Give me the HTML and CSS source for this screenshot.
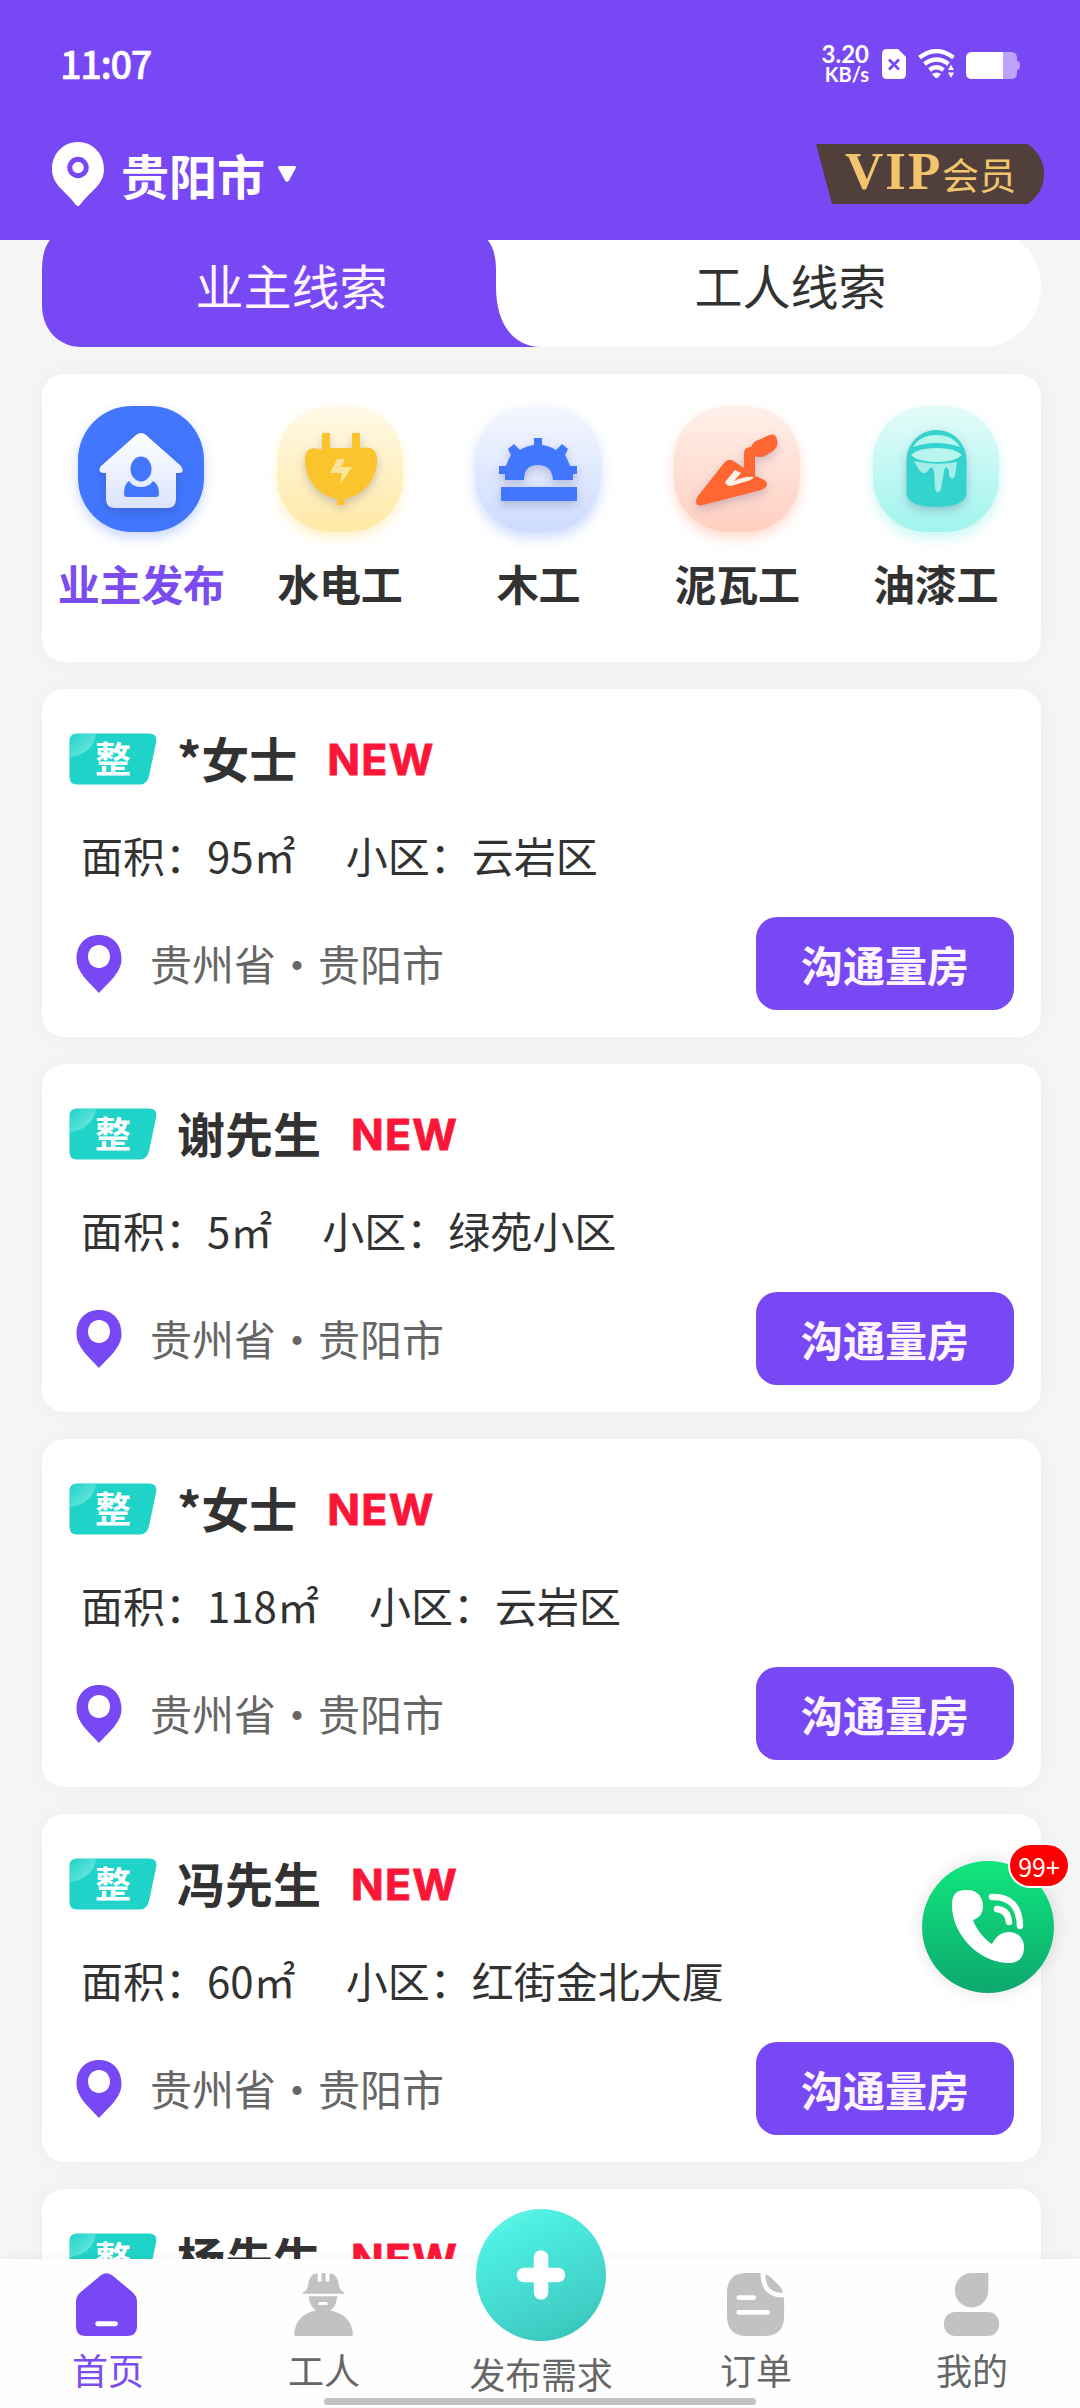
FILE: index.html
```html
<!DOCTYPE html>
<html lang="zh-CN">
<head>
<meta charset="utf-8">
<title>首页</title>
<link rel="stylesheet" href="styles.css">
</head>
<body>
<svg class="defs" width="0" height="0">
  <defs>
    <linearGradient id="tagShine" x1="0" y1="0" x2="1" y2="1"><stop offset="0" stop-color="#1fd3c8"/><stop offset="1" stop-color="#7eebe3"/></linearGradient>
    <linearGradient id="houseFill" x1="0" y1="0" x2="0" y2="1"><stop offset="0" stop-color="#fff"/><stop offset="1" stop-color="#dbe3fd"/></linearGradient>
  </defs>
  <symbol id="tag" viewBox="0 0 88 52">
    <path d="M8 0.5H80Q89 0.5 87 10L80 43Q78 51.500 71 51.500H8Q0.500 51.500 0.500 44V8Q0.500 0.500 8 0.500Z" fill="#1fd3c8"/>
    <path d="M2 24Q24 20 27 1H8Q1 1 1 8V24Z" fill="url(#tagShine)"/>
  </symbol>
  <symbol id="pin" viewBox="0 0 46 58">
    <path fill-rule="evenodd" d="M23 0C9 0 .5 10 .5 24C.5 37 12 46 23 58C34 46 45.500 37 45.500 24C45.500 10 37 0 23 0ZM23 10C29.500 10 34 15 34 21.500S29.500 33 23 33S12 28 12 21.500S16.500 10 23 10Z" fill="#7948f5"/>
  </symbol>
</svg>

<div class="screen">
  <header class="header">
    <div class="status">
      <span class="clock">11:07</span>
      <div class="status-right">
        <div class="speed"><span class="rate">3.20</span><span class="unit">KB/s</span></div>
        <svg class="sim" viewBox="0 0 24 30"><path d="M5 0H16L24 8V25Q24 30 19 30H5Q0 30 0 25V5Q0 0 5 0Z" fill="#fff"/><path d="M7 10.500L17 20.500M17 10.500L7 20.500" stroke="#7948f5" stroke-width="2.800"/></svg>
        <svg class="wifi" viewBox="0 0 38 30" fill="none" stroke="#fff" stroke-width="4.200"><path d="M1.500 8.500Q18.500 -4.500 35.500 8.500"/><path d="M6.500 15Q18.500 6 30.500 15"/><path d="M11.500 21Q18.500 15.500 25.500 21"/><path d="M14 25Q18.500 22 23 25L19.500 29H17.500Z" fill="#fff" stroke="none"/><path d="M30 21L33 15.500L36 21ZM30 23.500H36L33 29Z" fill="#fff" stroke="none"/></svg>
        <svg class="battery" viewBox="0 0 54 27"><path d="M37 0H45Q51 0 51 6V9Q54 9 54 13.500T51 18V21Q51 27 45 27H37Z" fill="#bda4fa"/><path d="M6 0H37V27H6Q0 27 0 21V6Q0 0 6 0Z" fill="#fff"/></svg>
      </div>
    </div>
    <div class="location-bar">
      <div class="city">
        <svg class="city-pin" viewBox="0 0 52 64"><path d="M26 0C11 0 0 12 0 27C0 43 13 48 24 63Q26 65 28 63C39 48 52 43 52 27C52 12 41 0 26 0Z" fill="#fff"/><circle cx="26" cy="25.500" r="8.200" fill="none" stroke="#7948f5" stroke-width="5"/></svg>
        <span>贵阳市</span>
        <svg class="caret" viewBox="0 0 18 16"><path d="M2 0H16Q19 0 17.500 2.500L11 14.500Q9 17 7 14.500L.5 2.500Q-1 0 2 0Z" fill="#fff"/></svg>
      </div>
      <div class="vip">
        <svg viewBox="0 0 228 60"><path d="M0 0H212Q228 12 228 30T212 60H16Z" fill="#503f3a"/></svg>
        <span class="vip-mark">VIP</span><span class="vip-word">会员</span>
      </div>
    </div>
  </header>

  <main class="content">
    <nav class="tabs">
      <svg class="tab-shape" viewBox="0 0 500 120"><path d="M40 0H412Q454 0 454 42V60C454 95 470 120 500 120H40C16 120 0 102 0 78V42Q0 0 40 0Z" fill="#7948f5"/></svg>
      <span class="tab active">业主线索</span>
      <span class="tab">工人线索</span>
    </nav>

    <section class="card cats">
      <div class="cat on">
        <svg class="cat-icon owner" viewBox="0 0 126 126"><path class="soft" d="M58 29Q63 25 68 29L103 60Q107 67 101 67H98V93Q98 102 89 102H37Q28 102 28 93V67H25Q19 66 23 60Z" fill="url(#houseFill)"/><ellipse cx="63" cy="63" rx="10.500" ry="12.500" fill="#4176fd"/><path d="M51 75Q55 81 63 81T75 75Q81 78 81 88Q81 91 78 91H49Q46 91 46 88Q46 78 51 75Z" fill="#4176fd"/></svg>
        <span>业主发布</span>
      </div>
      <div class="cat">
        <svg class="cat-icon power" viewBox="0 0 126 126"><path class="soft" d="M45 27H53V42H75V27H83V42C94 40 100 43 100 54C100 74 86 90 68 92.500V99H60V92.500C42 90 28 74 28 54C28 43 34 40 45 44Z" fill="#fcc42c"/><path d="M60 53H68L64 61H75L63 79L65 67H53Z" fill="#fbe39a"/></svg>
        <span>水电工</span>
      </div>
      <div class="cat">
        <svg class="cat-icon wood" viewBox="0 0 126 126"><g class="soft" fill="#4176fd"><path d="M30 74V68H24V60H31Q33 54 36 49L33 43L39 38L45 44Q51 40 59 39V32H67V39Q75 40 81 44L87 38L93 43L90 49Q93 54 95 60H102V68H98V74H78Q77 59 63 59T49 74Z"/><path d="M26 81H102V95H26Z"/></g></svg>
        <span>木工</span>
      </div>
      <div class="cat">
        <svg class="cat-icon mud" viewBox="0 0 126 126"><g class="soft"><path d="M50 57Q55 51 61 56L70 62V47Q70 41 77 41Q79 35 87 33L95 29Q102 27 103 34Q105 40 99 45L91 50Q86 52 81 50V70Q94 74 93 79Q92 82 87 84L29 99Q22 101 22 95Q22 93 24 90Z" fill="#ff6632"/><path d="M61 64L67 67L60 75Q71 70 80 71Q77 75 70 76L57 80Q52 80 51 76Z" fill="#fff0e8"/></g></svg>
        <span>泥瓦工</span>
      </div>
      <div class="cat">
        <svg class="cat-icon paint" viewBox="0 0 126 126"><path class="soft" d="M33.500 54A30 30 0 0 1 93.500 54V89Q90 101 63.500 101T33.500 89Z" fill="#35d3cd"/><path d="M40 41Q47 29 63.500 29T87 41Q63.500 33 40 41Z" fill="#b8f5ef"/><path d="M38 49Q45 42 63.500 42T89 49Q82 56 63.500 56T38 49Z" fill="#b8f5ef"/><path d="M41 55Q63 60 84 56L82 70Q79 76 76 69V64Q72 58 71 65L68 83Q65 90 62 83L61 65Q59 59 56 63Q52 71 46 64Z" fill="#a2eee8"/></svg>
        <span>油漆工</span>
      </div>
    </section>

    <section class="card lead">
      <div class="lead-head"><span class="tag"><svg><use href="#tag"/></svg><b>整</b></span><h3>*女士</h3><em>NEW</em></div>
      <div class="lead-info"><span>面积：95㎡</span><span>小区：云岩区</span></div>
      <div class="lead-foot"><svg class="pin"><use href="#pin"/></svg><span>贵州省・贵阳市</span><button>沟通量房</button></div>
    </section>
    <section class="card lead">
      <div class="lead-head"><span class="tag"><svg><use href="#tag"/></svg><b>整</b></span><h3>谢先生</h3><em>NEW</em></div>
      <div class="lead-info"><span>面积：5㎡</span><span>小区：绿苑小区</span></div>
      <div class="lead-foot"><svg class="pin"><use href="#pin"/></svg><span>贵州省・贵阳市</span><button>沟通量房</button></div>
    </section>
    <section class="card lead">
      <div class="lead-head"><span class="tag"><svg><use href="#tag"/></svg><b>整</b></span><h3>*女士</h3><em>NEW</em></div>
      <div class="lead-info"><span>面积：118㎡</span><span>小区：云岩区</span></div>
      <div class="lead-foot"><svg class="pin"><use href="#pin"/></svg><span>贵州省・贵阳市</span><button>沟通量房</button></div>
    </section>
    <section class="card lead">
      <div class="lead-head"><span class="tag"><svg><use href="#tag"/></svg><b>整</b></span><h3>冯先生</h3><em>NEW</em></div>
      <div class="lead-info"><span>面积：60㎡</span><span>小区：红街金北大厦</span></div>
      <div class="lead-foot"><svg class="pin"><use href="#pin"/></svg><span>贵州省・贵阳市</span><button>沟通量房</button></div>
    </section>
    <section class="card lead">
      <div class="lead-head"><span class="tag"><svg><use href="#tag"/></svg><b>整</b></span><h3>杨先生</h3><em>NEW</em></div>
    </section>
  </main>

  <footer class="tabbar">
    <a class="item on"><svg viewBox="0 0 62 64"><path d="M25 2.500Q31 -2 37 2.500L58 20Q62 24 62 29V54Q62 64 52 64H10Q0 64 0 54V29Q0 24 4 20Z" fill="#7948f5"/><path d="M22 51.500H40" stroke="#fff" stroke-width="5" stroke-linecap="round"/></svg><span>首页</span></a>
    <a class="item"><svg viewBox="0 0 60 64" fill="#c2c2c2"><path d="M9 19.500Q13 18 14 14Q15 4 20 1L24 .5V8Q26 10 28 8V0H32V8Q34 10 36 8V.5L40 1Q45 5 46 14Q47 18 51 19.500V21H9Z"/><path fill-rule="evenodd" d="M15 23.500H44Q43 34 37 38Q58 42 60 62Q60 64 58 64H2Q0 64 0 62Q2 42 22 38Q15 32 15 23.500ZM25 29.500V32.500H34V29.500Z"/></svg><span>工人</span></a>
    <a class="item add"><svg viewBox="0 0 52 50"><path d="M26 7.500V42.500M9 25H43" stroke="#fff" stroke-width="14.500" stroke-linecap="round"/></svg><span>发布需求</span></a>
    <a class="item"><svg viewBox="0 0 58 64" fill="#c2c2c2"><path d="M20 0H34Q34 25 58 25V44Q58 64 38 64H20Q0 64 0 44V20Q0 0 20 0Z"/><path d="M39 1Q44 3 48 8Q56 14 57 20Q39 21 39 1Z"/><path d="M12 25H27M12 40H41" stroke="#fff" stroke-width="5" stroke-linecap="round"/></svg><span>订单</span></a>
    <a class="item"><svg viewBox="0 0 56 64" fill="#c2c2c2"><path d="M28 0H45V18A17 17.500 0 1 1 28 0Z"/><rect y="39.500" width="56" height="24.500" rx="11.500"/></svg><span>我的</span></a>
    <i class="home-bar"></i>
  </footer>

  <div class="call">
    <svg viewBox="0 0 132 132"><path d="M30 45C30 31 36 29 46 29C56 29 61 37 61 45C61 53 57 57 51 59C54 68 62 78 70 83C74 75 80 71 87 71C96 71 102 78 102 86C102 98 95 103 84 102C55 100 30 72 30 45Z" fill="#fff"/><g fill="none" stroke="#fff" stroke-width="6.500" stroke-linecap="round"><path d="M70 36Q97 35 98 65"/><path d="M75 48Q86 49 87 61"/></g></svg>
    <span class="count">99+</span>
  </div>
</div>
</body>
</html>
```
FILE: styles.css
```css
* { box-sizing: border-box; }
body { margin: 0; font-family: "Noto Sans CJK SC", "Noto Sans", sans-serif; color: #323233; }
svg { display: block; }
.defs { position: absolute; }
.screen { position: relative; display: flex; flex-direction: column; width: 1080px; height: 2408px; overflow: hidden; background: #f5f5f5; }

.header { flex: none; height: 240px; background: #7948f5; color: #fff; padding-top: 36px; }
.status { display: flex; justify-content: space-between; align-items: center; height: 56px; padding: 0 60px 0 60px; }
.clock { font-size: 38px; font-weight: 500; line-height: 52px; letter-spacing: -1.4px; -webkit-text-stroke: .5px #fff; margin-top: -3px; }
.status-right { display: flex; align-items: center; }
.speed { display: flex; flex-direction: column; align-items: flex-end; margin: -1px 13px 0 0; font-family: Lato, sans-serif; font-weight: 700; }
.rate { font-size: 24px; line-height: 21px; }
.unit { font-size: 20px; line-height: 20px; }
.sim { width: 24px; height: 30px; margin-right: 12px; }
.wifi { width: 38px; height: 30px; margin-right: 10px; }
.battery { width: 54px; height: 27px; margin-top: 2px; }
.location-bar { display: flex; justify-content: space-between; align-items: center; height: 64px; margin-top: 50px; padding: 0 36px 0 52px; }
.city { display: flex; align-items: center; font-size: 48px; font-weight: 700; line-height: 64px; }
.city span { margin-top: -1px; }
.city-pin { width: 52px; height: 64px; margin-right: 17px; }
.caret { width: 18px; height: 16px; margin-left: 13px; }
.vip { position: relative; display: flex; width: 228px; height: 60px; padding-left: 29px; color: #f2c46d; }
.vip svg { position: absolute; inset: 0; width: 228px; height: 60px; }
.vip span { position: relative; white-space: nowrap; }
.vip-mark { font: 700 53px/55px "Liberation Serif", serif; width: 97px; letter-spacing: 2px; }
.vip-word { font-size: 37px; line-height: 61px; font-weight: 400; }

.content { flex: 1; min-height: 0; overflow: hidden; padding: 0 39px 0 42px; }
.tabs { position: relative; display: flex; height: 120px; margin-top: -13px; padding-right: 1px; border-radius: 60px; background: #fff; }
.tab-shape { position: absolute; left: 0; top: 0; width: 500px; height: 120px; }
.tab { position: relative; flex: 1; font-size: 48px; line-height: 114px; text-align: center; }
.tab.active { color: #fff5ff; }
.card { background: #fff; border-radius: 22px; box-shadow: 0 0 24px rgba(0, 0, 0, .035); margin-top: 27px; }
.cats { display: grid; grid-template-columns: repeat(5, 1fr); height: 288px; padding: 32px 6px 0 0; }
.cat { display: flex; flex-direction: column; align-items: center; font-size: 42px; font-weight: 700; line-height: 56px; }
.cat.on { color: #7b4cf0; }
.cat span { margin-top: 23px; letter-spacing: -.2px; white-space: nowrap; }
.cat-icon { width: 126px; height: 126px; border-radius: 54px; }
.soft { filter: drop-shadow(0 4px 5px rgba(60, 60, 120, .25)); }
.owner { background: #4176fd; box-shadow: 0 5px 12px rgba(65, 118, 253, .3); }
.power { background: linear-gradient(#fff9e7, #ffe9a6); box-shadow: 0 6px 12px rgba(255, 220, 110, .35); }
.wood { background: linear-gradient(#f5f7ff, #cddbfd); box-shadow: 0 6px 12px rgba(65, 118, 253, .25); }
.mud { background: linear-gradient(#fff0ea, #ffcfc0); box-shadow: 0 6px 12px rgba(255, 120, 70, .25); }
.paint { background: linear-gradient(#e4fbf9, #a0f4ee); box-shadow: 0 6px 12px rgba(50, 225, 210, .25); }

.lead { height: 348px; padding: 40px 27px 0; }
.lead-head { display: flex; align-items: center; height: 60px; }
.tag { position: relative; width: 88px; height: 52px; }
.tag svg { width: 88px; height: 52px; }
.tag b { position: absolute; left: 26px; top: 0; font-size: 36px; line-height: 49px; font-weight: 700; color: #fff; }
.lead-head h3 { margin: -4px 0 0 20px; font-size: 48px; line-height: 60px; font-weight: 700; }
.lead-head em { margin: -1px 0 0 30px; font: 700 43px/60px Inter, sans-serif; letter-spacing: 1.2px; color: #fb1638; -webkit-text-stroke: .8px #fb1638; }
.lead-info { display: flex; gap: 50px; margin-top: 36px; padding-left: 12px; font-size: 42px; line-height: 60px; }
.lead-foot { display: flex; align-items: center; height: 93px; margin-top: 32px; padding-left: 7px; font-size: 42px; color: #666; }
.lead-foot span { margin-top: -2px; }
.pin { width: 46px; height: 58px; margin-right: 28px; }
.lead-foot button { margin-left: auto; width: 258px; height: 93px; padding: 0; border: 0; border-radius: 21px; background: #7948f5; color: #fff5ff; font: inherit; font-weight: 700; line-height: 90px; }

.tabbar { position: relative; flex: none; display: grid; grid-template-columns: repeat(5, 216px); height: 149px; background: #fefefe; box-shadow: 0 0 10px rgba(0, 0, 0, .05); }
.item { display: flex; flex-direction: column; align-items: center; padding-top: 14px; font-size: 36px; line-height: 50px; color: #666; }
.item.on svg { margin-left: -3px; }
.item svg { width: auto; height: 63px; }
.item span { margin-top: 8px; }
.item.on { color: #7b4cf0; }
.item.add { padding: 0 0 0 2px; }
.item.add svg { width: 130px; height: 132px; margin-top: -50px; padding: 41px 39px; border-radius: 50%; background: linear-gradient(155deg, #72f3e7 5%, #4df0e2 20%, #42cfc7 75%, #2fc1b5); }
.item.add span { margin-top: 7px; letter-spacing: -.3px; }
.home-bar { position: absolute; left: 324px; bottom: 3px; width: 432px; height: 7px; border-radius: 4px; background: #c2c2c2; }

.call { position: absolute; left: 922px; top: 1861px; width: 132px; height: 132px; border-radius: 50%; background: linear-gradient(#10e67d, #0da86e); box-shadow: 0 0 18px rgba(0, 0, 0, .12); }
.count { position: absolute; left: 86px; top: -18px; height: 45px; width: 62px; border: 2px solid #fff; border-radius: 23px; background: #f00; color: #fff; font-size: 25px; font-weight: 400; line-height: 42px; text-align: center; }
```
